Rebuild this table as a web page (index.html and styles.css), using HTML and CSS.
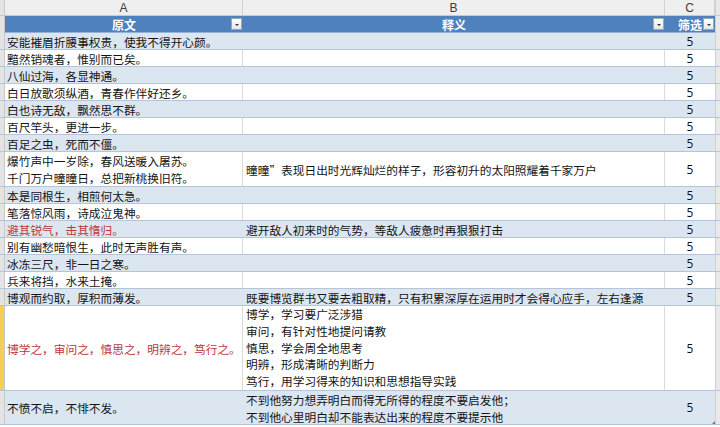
FILE: index.html
```html
<!DOCTYPE html>
<html lang="zh">
<head>
<meta charset="utf-8">
<link rel="stylesheet" href="styles.css">
</head>
<body>
<div class="sheet">
  <div class="row colhead">
    <div class="gut"></div>
    <div class="ch">A</div>
    <div class="ch">B</div>
    <div class="ch">C</div>
    <div class="gut"></div>
  </div>
  <div class="row thead">
    <div class="gut"></div>
    <div class="th">原文<span class="dd"></span></div>
    <div class="th">释义<span class="dd"></span></div>
    <div class="th">筛选<span class="dd"></span></div>
    <div class="gut"></div>
  </div>

  <div class="row band"><div class="gut"></div><div class="c a">安能摧眉折腰事权贵，使我不得开心颜。</div><div class="c b"></div><div class="c n">5</div><div class="gut"></div></div>
  <div class="row"><div class="gut"></div><div class="c a">黯然销魂者，惟别而已矣。</div><div class="c b"></div><div class="c n">5</div><div class="gut"></div></div>
  <div class="row band"><div class="gut"></div><div class="c a">八仙过海，各显神通。</div><div class="c b"></div><div class="c n">5</div><div class="gut"></div></div>
  <div class="row"><div class="gut"></div><div class="c a">白日放歌须纵酒，青春作伴好还乡。</div><div class="c b"></div><div class="c n">5</div><div class="gut"></div></div>
  <div class="row band"><div class="gut"></div><div class="c a">白也诗无敌，飘然思不群。</div><div class="c b"></div><div class="c n">5</div><div class="gut"></div></div>
  <div class="row"><div class="gut"></div><div class="c a">百尺竿头，更进一步。</div><div class="c b"></div><div class="c n">5</div><div class="gut"></div></div>
  <div class="row band"><div class="gut"></div><div class="c a">百足之虫，死而不僵。</div><div class="c b"></div><div class="c n">5</div><div class="gut"></div></div>
  <div class="row h2"><div class="gut"></div><div class="c a ml">爆竹声中一岁除，春风送暖入屠苏。<br>千门万户曈曈日，总把新桃换旧符。</div><div class="c b">曈曈”表现日出时光辉灿烂的样子，形容初升的太阳照耀着千家万户</div><div class="c n">5</div><div class="gut"></div></div>
  <div class="row band"><div class="gut"></div><div class="c a">本是同根生，相煎何太急。</div><div class="c b"></div><div class="c n">5</div><div class="gut"></div></div>
  <div class="row"><div class="gut"></div><div class="c a">笔落惊风雨，诗成泣鬼神。</div><div class="c b"></div><div class="c n">5</div><div class="gut"></div></div>
  <div class="row band"><div class="gut"></div><div class="c a red">避其锐气，击其惰归。</div><div class="c b">避开敌人初来时的气势，等敌人疲惫时再狠狠打击</div><div class="c n">5</div><div class="gut"></div></div>
  <div class="row"><div class="gut"></div><div class="c a">别有幽愁暗恨生，此时无声胜有声。</div><div class="c b"></div><div class="c n">5</div><div class="gut"></div></div>
  <div class="row band"><div class="gut"></div><div class="c a">冰冻三尺，非一日之寒。</div><div class="c b"></div><div class="c n">5</div><div class="gut"></div></div>
  <div class="row"><div class="gut"></div><div class="c a">兵来将挡，水来土掩。</div><div class="c b"></div><div class="c n">5</div><div class="gut"></div></div>
  <div class="row band"><div class="gut"></div><div class="c a">博观而约取，厚积而薄发。</div><div class="c b">既要博览群书又要去粗取精，只有积累深厚在运用时才会得心应手，左右逢源</div><div class="c n">5</div><div class="gut"></div></div>
  <div class="row h5"><div class="gut sel"></div><div class="c a red">博学之，审问之，慎思之，明辨之，笃行之。</div><div class="c b ml">博学，学习要广泛涉猎<br>审问，有针对性地提问请教<br>慎思，学会周全地思考<br>明辨，形成清晰的判断力<br>笃行，用学习得来的知识和思想指导实践</div><div class="c n">5</div><div class="gut"></div></div>
  <div class="row band h2b"><div class="gut"></div><div class="c a">不愤不启，不悱不发。</div><div class="c b ml">不到他努力想弄明白而得无所得的程度不要启发他；<br>不到他心里明白却不能表达出来的程度不要提示他</div><div class="c n last">5</div><div class="gut"></div></div>
</div>
</body>
</html>
```

FILE: styles.css
```css
html, body {
  margin: 0;
  padding: 0;
  background: #ffffff;
}
body {
  width: 720px;
  height: 427px;
  overflow: hidden;
  font-family: "Noto Sans CJK SC", "Noto Sans", sans-serif;
  font-size: 11.7px;
  color: #141414;
}
.sheet {
  display: flex;
  flex-direction: column;
}
.row {
  display: grid;
  grid-template-columns: 5px 238px 422px 50px 5px;
  height: 17px;
  box-sizing: border-box;
  border-bottom: 1px solid #b4c4d9;
  background: #ffffff;
}
.row.band { background: #dce6f1; }
.row.h2 { height: 35px; }
.row.h5 { height: 85px; }
.row.h2b { height: 34px; }

.gut {
  background: #e4e4e4;
  border-right: 1px solid #c8c8c8;
}
.row > .gut:last-child {
  background: #e9e9e9;
  border-right: none;
  border-left: 1px solid #d0d0d0;
}
.gut.sel { background: #f7cd55; }

.colhead {
  height: 16px;
  background: #efefef;
  border-bottom: 1px solid #c9c9c9;
}
.ch {
  display: flex;
  align-items: center;
  justify-content: center;
  font-family: "Liberation Sans", Arial, sans-serif;
  font-size: 12px;
  color: #3c3c3c;
  border-right: 1px solid #d3d3d3;
}

.thead {
  height: 17px;
  background: #4f81bd;
  border-bottom: 1px solid #95b3d7;
}
.th {
  position: relative;
  display: flex;
  align-items: center;
  justify-content: center;
  color: #ffffff;
  font-weight: bold;
  font-size: 12px;
}
.dd {
  position: absolute;
  right: 1px;
  top: 2px;
  width: 11px;
  height: 12px;
  box-sizing: border-box;
  background: linear-gradient(#ffffff, #e6e6e6);
  border: 1px solid #9aa8b8;
}
.dd::after {
  content: "";
  position: absolute;
  left: 3px;
  top: 5px;
  border-left: 2px solid transparent;
  border-right: 2px solid transparent;
  border-top: 2px solid #333;
}

.c {
  display: flex;
  align-items: center;
  white-space: nowrap;
  overflow: hidden;
  line-height: 17px;
}
.row:not(.band) .c.a,
.row:not(.band) .c.b {
  border-right: 1px solid #dadada;
}
.c.a { padding-left: 2px; }
.c.b { padding-left: 3px; }
.c.ml { align-items: center; }
.c.n {
  justify-content: center;
  font-family: "Open Sans", "Liberation Sans", sans-serif;
  font-size: 12px;
  color: #111;
}
.c.last { position: relative; }
.c.last::after {
  content: "";
  position: absolute;
  right: 0;
  bottom: 0;
  border-left: 3px solid transparent;
  border-bottom: 3px solid #5a7fb0;
}
.red { color: #c0363a; }
.h5 .c.b { line-height: 16.8px; }
```
